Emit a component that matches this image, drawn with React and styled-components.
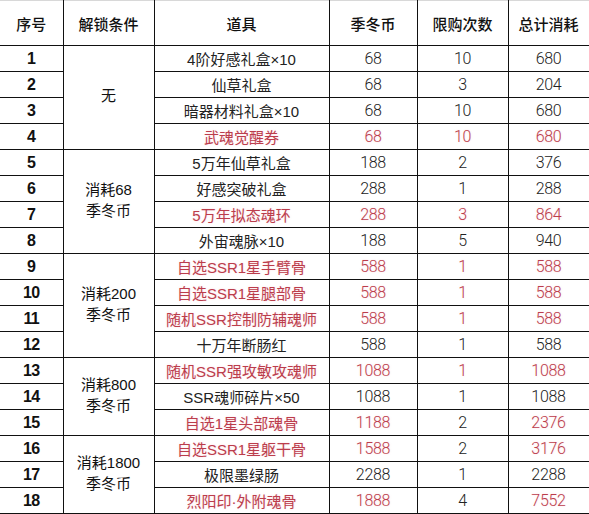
import React from 'react';
import styled, { createGlobalStyle } from 'styled-components';

const GlobalStyle = createGlobalStyle`
  html, body {
    margin: 0;
    padding: 0;
    background: #fff;
  }
  body {
    font-family: 'Liberation Sans', 'Noto Sans CJK SC', sans-serif;
  }
`;

const Table = styled.table`
  width: 589px;
  border-collapse: collapse;
  table-layout: fixed;
  border-top: 1px solid #d8d8d8;
`;

const HeadCell = styled.th`
  height: 44px;
  padding: 0;
  border: 1px solid #111;
  border-top: 1px solid #d8d8d8;
  font-family: 'Noto Sans CJK SC', sans-serif;
  font-size: 15px;
  font-weight: 500;
  color: #111;
  text-align: center;
  &:first-child {
    border-left: none;
  }
`;

const Cell = styled.td`
  height: 25px;
  padding: 0;
  border: 1px solid #111;
  text-align: center;
  white-space: nowrap;
  font-family: 'Roboto', 'Liberation Sans', sans-serif;
  font-weight: 300;
  font-size: 16px;
  letter-spacing: -0.3px;
  color: ${(p) => (p.$red ? '#bb3d4c' : '#222')};
  text-shadow: ${(p) => (p.$red ? '0 0 2px rgba(240, 150, 165, 0.35)' : 'none')};
`;

const IndexCell = styled(Cell)`
  border-left: none;
  font-family: 'Liberation Sans', sans-serif;
  font-weight: 700;
  font-size: 16px;
  letter-spacing: -0.6px;
  color: #111;
  text-shadow: none;
`;

const GroupCell = styled(Cell)`
  font-family: 'Liberation Sans', 'Noto Sans CJK SC', sans-serif;
  font-weight: 400;
  font-size: 15px;
  letter-spacing: 0;
  line-height: 21px;
  color: #111;
  white-space: normal;
  padding-bottom: 4px;
`;

const ItemCell = styled(Cell)`
  font-family: 'Liberation Sans', 'Noto Sans CJK SC', sans-serif;
  font-size: 15px;
  font-weight: 400;
  letter-spacing: 0;
`;

const groups = {
  1: { span: 4, lines: ['无'] },
  5: { span: 4, lines: ['消耗68', '季冬币'] },
  9: { span: 4, lines: ['消耗200', '季冬币'] },
  13: { span: 3, lines: ['消耗800', '季冬币'] },
  16: { span: 3, lines: ['消耗1800', '季冬币'] },
};

const rows = [
  { item: '4阶好感礼盒×10', price: 68, qty: 10, total: 680 },
  { item: '仙草礼盒', price: 68, qty: 3, total: 204 },
  { item: '暗器材料礼盒×10', price: 68, qty: 10, total: 680 },
  { item: '武魂觉醒券', price: 68, qty: 10, total: 680, red: true, qtyRed: true },
  { item: '5万年仙草礼盒', price: 188, qty: 2, total: 376 },
  { item: '好感突破礼盒', price: 288, qty: 1, total: 288 },
  { item: '5万年拟态魂环', price: 288, qty: 3, total: 864, red: true, qtyRed: true },
  { item: '外宙魂脉×10', price: 188, qty: 5, total: 940 },
  { item: '自选SSR1星手臂骨', price: 588, qty: 1, total: 588, red: true, qtyRed: true },
  { item: '自选SSR1星腿部骨', price: 588, qty: 1, total: 588, red: true, qtyRed: true },
  { item: '随机SSR控制防辅魂师', price: 588, qty: 1, total: 588, red: true, qtyRed: true },
  { item: '十万年断肠红', price: 588, qty: 1, total: 588 },
  { item: '随机SSR强攻敏攻魂师', price: 1088, qty: 1, total: 1088, red: true, qtyRed: true },
  { item: 'SSR魂师碎片×50', price: 1088, qty: 1, total: 1088 },
  { item: '自选1星头部魂骨', price: 1188, qty: 2, total: 2376, red: true },
  { item: '自选SSR1星躯干骨', price: 1588, qty: 2, total: 3176, red: true },
  { item: '极限墨绿肠', price: 2288, qty: 1, total: 2288 },
  { item: '烈阳印·外附魂骨', price: 1888, qty: 4, total: 7552, red: true },
];

const headers = ['序号', '解锁条件', '道具', '季冬币', '限购次数', '总计消耗'];
const widths = [63, 91, 175, 88, 91, 81];

export default function App() {
  return (
    <>
      <GlobalStyle />
      <Table>
        <colgroup>
          {widths.map((w, i) => (
            <col key={i} style={{ width: w }} />
          ))}
        </colgroup>
        <thead>
          <tr>
            {headers.map((h) => (
              <HeadCell key={h}>{h}</HeadCell>
            ))}
          </tr>
        </thead>
        <tbody>
          {rows.map((r, i) => {
            const n = i + 1;
            const g = groups[n];
            return (
              <tr key={n}>
                <IndexCell>{n}</IndexCell>
                {g && (
                  <GroupCell rowSpan={g.span}>
                    {g.lines.map((l, k) => (
                      <div key={k}>{l}</div>
                    ))}
                  </GroupCell>
                )}
                <ItemCell $red={r.red}>{r.item}</ItemCell>
                <Cell $red={r.red}>{r.price}</Cell>
                <Cell $red={r.qtyRed}>{r.qty}</Cell>
                <Cell $red={r.red}>{r.total}</Cell>
              </tr>
            );
          })}
        </tbody>
      </Table>
    </>
  );
}
